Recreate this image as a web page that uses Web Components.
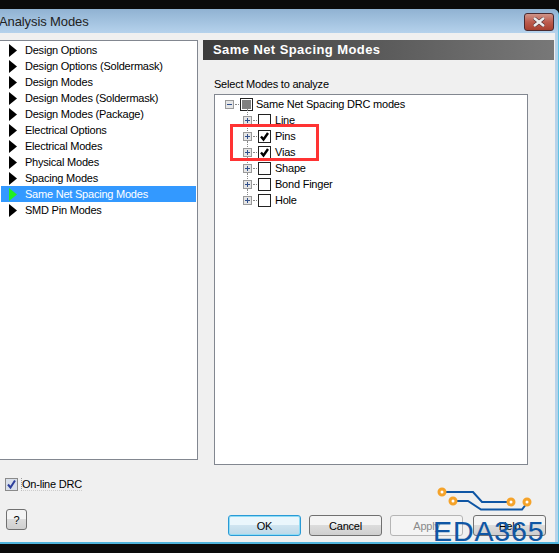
<!DOCTYPE html>
<html>
<head>
<meta charset="utf-8">
<title>Analysis Modes</title>
<style>
html, body { margin: 0; padding: 0; background: #0a0a0a; }
body { width: 559px; height: 553px; overflow: hidden; font: 11px "Liberation Sans", Arial, sans-serif; color: #000; letter-spacing: -.22px; }
</style>
</head>
<body>
<analysis-dialog>
  <mode-item>Design Options</mode-item>
  <mode-item>Design Options (Soldermask)</mode-item>
  <mode-item>Design Modes</mode-item>
  <mode-item>Design Modes (Soldermask)</mode-item>
  <mode-item>Design Modes (Package)</mode-item>
  <mode-item>Electrical Options</mode-item>
  <mode-item>Electrical Modes</mode-item>
  <mode-item>Physical Modes</mode-item>
  <mode-item>Spacing Modes</mode-item>
  <mode-item selected>Same Net Spacing Modes</mode-item>
  <mode-item>SMD Pin Modes</mode-item>
  <tree-row slot="tree" root state="mixed">Same Net Spacing DRC modes</tree-row>
  <tree-row slot="tree">Line</tree-row>
  <tree-row slot="tree" state="checked">Pins</tree-row>
  <tree-row slot="tree" state="checked">Vias</tree-row>
  <tree-row slot="tree">Shape</tree-row>
  <tree-row slot="tree">Bond Finger</tree-row>
  <tree-row slot="tree">Hole</tree-row>
</analysis-dialog>
<script>
class ModeItem extends HTMLElement {
  constructor () {
    super()
    this.attachShadow({ mode: 'open' }).innerHTML = `
      <style>
        :host { display: flex; align-items: center; height: 16px; padding-left: 8px; color: #000; }
        :host([selected]) { background: #3399ff; color: #fff; }
        svg { width: 8px; height: 13px; margin-right: 8px; fill: #000; flex: none; }
        :host([selected]) svg { fill: #22ee22; }
      </style>
      <svg viewBox="0 0 8 13"><path d="M0 0 L8 6.5 L0 13 Z"/></svg><slot></slot>`
  }
}
customElements.define('mode-item', ModeItem)

class TreeRow extends HTMLElement {
  constructor () {
    super()
    const state = this.getAttribute('state')
    const root = this.hasAttribute('root')
    let mark = ''
    if (state === 'checked') mark = '<path d="M3 6.5 L5.5 9.5 L10 3" fill="none" stroke="#000" stroke-width="2.4"/>'
    if (state === 'mixed') mark = '<rect x="2" y="2" width="9" height="9" fill="#808080"/>'
    const sign = root ? '<path d="M2 4.5 H7" stroke="#31508c"/>' : '<path d="M2 4.5 H7 M4.5 2 V7" stroke="#31508c"/>'
    this.attachShadow({ mode: 'open' }).innerHTML = `
      <style>
        :host { display: flex; align-items: center; height: 16px; padding-left: ${root ? 10 : 28}px; position: relative; }
        .exp { width: 9px; height: 9px; flex: none; }
        .dots { width: 4px; margin: 0 1px; border-top: 1px dotted #888; flex: none; }
        .box { width: 13px; height: 13px; flex: none; margin-right: ${root ? 3 : 4}px; }
        .up { position: absolute; left: ${root ? 14 : 32}px; top: -3px; height: 6px; border-left: 1px dotted #888; }
      </style>
      ${root ? '' : '<span class="up"></span>'}
      <svg class="exp" viewBox="0 0 9 9"><rect x=".5" y=".5" width="8" height="8" fill="#e6e6e6" stroke="#9a9a9a"/>${sign}</svg>
      <span class="dots"></span>
      <svg class="box" viewBox="0 0 13 13"><rect x=".5" y=".5" width="12" height="12" fill="#fff" stroke="#222"/>${mark}</svg>
      <slot></slot>`
  }
}
customElements.define('tree-row', TreeRow)

class DialogButton extends HTMLElement {
  constructor () {
    super()
    this.attachShadow({ mode: 'open' }).innerHTML = `
      <style>
        :host { display: flex; align-items: center; justify-content: center; box-sizing: border-box; width: 73px; height: 21px; border: 1px solid #707070; border-radius: 3px; background: linear-gradient(#f4f4f4 0 45%, #dcdcdc 50%, #cfcfcf); }
        :host([primary]) { border-color: #2a9ad6; box-shadow: inset 0 0 0 1px #8fdcf5; background: linear-gradient(#eaf6fc 0 45%, #cfe4f0 50%, #bcd8e8); }
        :host([disabled]) { border-color: #b5b5b5; background: #f4f4f4; color: #8a8a8a; }
      </style>
      <slot></slot>`
  }
}
customElements.define('dialog-button', DialogButton)

class EdaLogo extends HTMLElement {
  constructor () {
    super()
    this.attachShadow({ mode: 'open' }).innerHTML = `
      <style>
        :host { position: absolute; left: 430px; top: 480px; width: 125px; height: 66px; display: block; }
        svg { position: absolute; left: 0; top: 0; }
        span { position: absolute; left: 3px; top: 33px; font: 28.5px/36px "Liberation Sans", Arial, sans-serif; letter-spacing: .9px; -webkit-text-stroke: .15px #0f56a4; color: #0f56a4; white-space: nowrap; }
      </style>
      <svg width="125" height="40" viewBox="0 0 125 40" fill="none">
        <path d="M12 12 H43 L52 22 H81 M23 21 H38 L51 29.500 H92 L97 23" stroke="#0f56a4" stroke-width="2"/>
        <circle cx="12" cy="12" r="3" fill="#fff" stroke="#f5a32a" stroke-width="3"/>
        <circle cx="23" cy="21" r="3" fill="#fff" stroke="#f5a32a" stroke-width="3"/>
        <circle cx="81" cy="22" r="3" fill="#fff" stroke="#f5a32a" stroke-width="3"/>
        <circle cx="97" cy="22" r="3" fill="#fff" stroke="#f5a32a" stroke-width="3"/>
      </svg>
      <span>EDA365</span>`
  }
}
customElements.define('eda-logo', EdaLogo)

class AnalysisDialog extends HTMLElement {
  constructor () {
    super()
    this.attachShadow({ mode: 'open' }).innerHTML = `
      <style>
        :host { display: block; position: relative; width: 559px; height: 553px; padding-top: 9px; box-sizing: border-box; }
        .frame { height: 535px; box-sizing: border-box; border-right: 1px solid #62c2e2; border-bottom: 2px solid #4fb4dc; border-radius: 0 6px 0 0; background: #b6d3ea; display: flex; flex-direction: column; overflow: hidden; }
        .title { height: 24px; flex: none; display: flex; justify-content: space-between; align-items: flex-start; background: linear-gradient(#90b2d2, #b5d2ec); font: 13px "Liberation Sans", Arial, sans-serif; letter-spacing: -.1px; color: #222; line-height: 25px; padding-right: 4px; }
        .title > span:first-child { margin-left: -1px; }
        .close { width: 30px; height: 18px; margin-top: 4px; border: 1px solid #4a2a30; border-radius: 3px; box-sizing: border-box; background: linear-gradient(#cf9488, #bd5c4e 50%, #a8402f); display: flex; align-items: center; justify-content: center; }
        .main { flex: 1; margin-right: 3px; background: #f0f0f0; display: grid; grid-template-columns: 198px 1fr; column-gap: 5px; padding: 7px 1px 0 0; }
        .side { display: flex; flex-direction: column; }
        .list { height: 420px; box-sizing: border-box; border: 1px solid #828790; border-left: 0; background: #fff; padding: 1px 1px 0; }
        .drc { display: flex; align-items: center; margin: 16px 0 0 5px; height: 16px; }
        .drc svg { width: 13px; height: 13px; margin-right: 4px; }
        .drc svg + span { border-left: 1px dotted #999; border-bottom: 1px dotted #ccc; margin-left: -1px; }
        .help { width: 21px; height: 21px; margin: 17px 0 0 6px; box-sizing: border-box; border: 1px solid #707070; border-radius: 3px; display: flex; align-items: center; justify-content: center; background: linear-gradient(#f4f4f4 0 45%, #dcdcdc 50%, #cfcfcf); }
        .panel { display: flex; flex-direction: column; }
        .head { height: 20px; flex: none; background: linear-gradient(90deg, #3c3c3c, #787878); color: #fff; font: bold 13px/20px "Liberation Sans", sans-serif; padding-left: 10px; letter-spacing: .42px; }
        .label { margin: 18px 0 3px 11px; height: 13px; line-height: 13px; }
        .tree { position: relative; width: 314px; height: 371px; margin-left: 11px; box-sizing: border-box; border: 1px solid #828790; background: #fff; padding-top: 1px; }
        .mark { position: absolute; left: 15px; top: 29px; width: 89px; height: 37px; box-sizing: border-box; border: 3px solid #ff3333; }
        .actions { display: flex; gap: 8px; margin: 50px 0 0 25px; }
        .actions :last-child { margin-left: 2px; }
      </style>
      <div class="frame">
        <div class="title"><span>Analysis Modes</span><span class="close"><svg width="16" height="10" viewBox="0 0 16 10"><path d="M3 1 L13 9 M13 1 L3 9" stroke="#4a2a30" stroke-width="3.600"/><path d="M3 1 L13 9 M13 1 L3 9" stroke="#ececec" stroke-width="2.600"/></svg></span></div>
        <div class="main">
          <div class="side">
            <div class="list"><slot></slot></div>
            <div class="drc"><svg viewBox="0 0 13 13"><rect x=".5" y=".5" width="12" height="12" fill="#d8dfea" stroke="#8a8a8a"/><path d="M3 6.500 L5.500 9.500 L10 2.500" fill="none" stroke="#2c3f9c" stroke-width="2"/></svg><span>On-line DRC</span></div>
            <div class="help">?</div>
          </div>
          <div class="panel">
            <div class="head">Same Net Spacing Modes</div>
            <div class="label">Select Modes to analyze</div>
            <div class="tree"><slot name="tree"></slot><div class="mark"></div></div>
            <div class="actions">
              <dialog-button primary>OK</dialog-button>
              <dialog-button>Cancel</dialog-button>
              <dialog-button disabled>Apply</dialog-button>
              <dialog-button>Help</dialog-button>
            </div>
          </div>
        </div>
      </div>
      <eda-logo></eda-logo>`
  }
}
customElements.define('analysis-dialog', AnalysisDialog)
</script>
</body>
</html>
